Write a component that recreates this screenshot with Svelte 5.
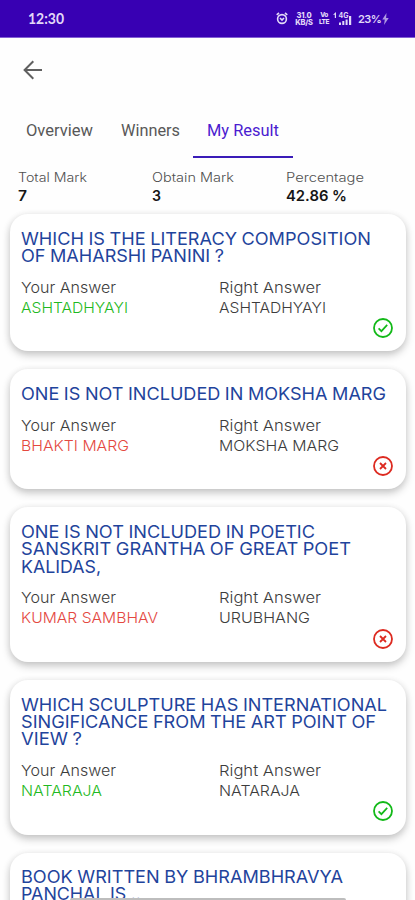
<script>
  // w = drawn width of each line of text, in px
  const TABS = [
    { label: 'Overview', w: 67 },
    { label: 'Winners', w: 59 },
    { label: 'My Result', w: 72, active: true },
  ]

  const STATS = [
    { label: 'Total Mark', w: 69, value: '7', vw: 9 },
    { label: 'Obtain Mark', w: 82, value: '3', vw: 9 },
    { label: 'Percentage', w: 78, value: '42.86 %', vw: 61 },
  ]

  const RESULTS = [
    {
      question: [['WHICH IS THE LITERACY COMPOSITION', 350], ['OF MAHARSHI PANINI ?', 203]],
      yours: ['ASHTADHYAYI', 107],
      right: ['ASHTADHYAYI', 107],
      correct: true,
    },
    {
      question: [['ONE IS NOT INCLUDED IN MOKSHA MARG', 365]],
      yours: ['BHAKTI MARG', 108],
      right: ['MOKSHA MARG', 120],
      correct: false,
    },
    {
      question: [['ONE IS NOT INCLUDED IN POETIC', 294], ['SANSKRIT GRANTHA OF GREAT POET', 330], ['KALIDAS,', 80]],
      yours: ['KUMAR SAMBHAV', 137],
      right: ['URUBHANG', 91],
      correct: false,
    },
    {
      question: [['WHICH SCULPTURE HAS INTERNATIONAL', 366], ['SINGIFICANCE FROM THE ART POINT OF', 355], ['VIEW ?', 61]],
      yours: ['NATARAJA', 81],
      right: ['NATARAJA', 81],
      correct: true,
    },
    {
      question: [['BOOK WRITTEN BY BHRAMBHRAVYA', 322], ['PANCHAL IS ..', 120]],
    },
  ]

  // Stretches a line of text to the given width
  function fit(node, width) {
    const natural = node.getBoundingClientRect().width
    node.style.transform = `scaleX(${width / natural})`
  }
</script>

<div class="screen">
  <header class="status">
    <span class="clock"><span class="line" use:fit={36}>12:30</span></span>
    <div class="indicators">
      <svg class="alarm" width="12" height="13" viewBox="0 0 12 13" fill="none" stroke="currentColor" stroke-width="1.6">
        <circle cx="6" cy="7" r="4.4" />
        <path d="M0.7 2.8 3 1M11.3 2.8 9 1M4 6l2 2 2-2" />
      </svg>
      <div class="tiny speed">
        <span>31.0</span>
        <span>KB/S</span>
      </div>
      <div class="tiny volte">
        <span>Vo</span>
        <span>LTE</span>
      </div>
      <div class="signal">
        <svg width="5" height="6" viewBox="0 0 5 6" fill="currentColor">
          <path d="M3 0v6H1.8V2.8H0z" />
        </svg>
        <div class="bars">
          <span class="net">4G</span>
          <svg width="10" height="6" viewBox="0 0 10 6" fill="currentColor">
            <path d="M0 3.5h2V6H0zM3.3 2h2v4h-2zM6.6 .5h2V6h-2z" />
          </svg>
        </div>
        <svg width="3" height="9" viewBox="0 0 3 9" fill="currentColor">
          <path d="M0 0h2.2v9H0z" />
        </svg>
      </div>
      <span class="battery"><span class="line">23%</span></span>
      <svg class="bolt" width="7" height="12" viewBox="0 0 7 12" fill="currentColor">
        <path d="M4.5 0 .3 6.5h2.5L2 12l4.7-7H4.1z" />
      </svg>
    </div>
  </header>

  <nav class="topbar">
    <button class="back" aria-label="Back">
      <svg width="20" height="20" viewBox="0 0 20 20" fill="none" stroke="#606060" stroke-width="2">
        <path d="M19 10H2M10.3 1.3 1.6 10l8.7 8.7" />
      </svg>
    </button>
  </nav>

  <div class="tabs">
    {#each TABS as tab}
      <button class="tab" class:active={tab.active} style="width: {tab.w + 27.5}px">
        <span class="line" use:fit={tab.w}>{tab.label}</span>
      </button>
    {/each}
  </div>

  <section class="stats">
    {#each STATS as stat}
      <div class="stat">
        <div class="stat-label"><span class="line" use:fit={stat.w}>{stat.label}</span></div>
        <div class="stat-value"><span class="line" use:fit={stat.vw}>{stat.value}</span></div>
      </div>
    {/each}
  </section>

  <main class="results">
    {#each RESULTS as result}
      <article class="card">
        <h2 class="question">
          {#each result.question as [text, w]}
            <div><span class="line" use:fit={w}>{text}</span></div>
          {/each}
        </h2>
        {#if result.yours}
          <div class="answers">
            <div>
              <div><span class="line" use:fit={95}>Your Answer</span></div>
              <div class={result.correct ? 'good' : 'bad'}>
                <span class="line" use:fit={result.yours[1]}>{result.yours[0]}</span>
              </div>
            </div>
            <div>
              <div><span class="line" use:fit={102}>Right Answer</span></div>
              <div><span class="line" use:fit={result.right[1]}>{result.right[0]}</span></div>
            </div>
          </div>
          <svg class="mark {result.correct ? 'good' : 'bad'}" width="20" height="20" viewBox="0 0 20 20" fill="none" stroke="currentColor">
            <circle cx="10" cy="10" r="9" stroke-width="1.8" />
            {#if result.correct}
              <path d="M5.6 10.4 8.4 13.2 14.2 6.9" stroke-width="1.7" />
            {:else}
              <path d="M7 7l6 6M13 7l-6 6" stroke-width="1.8" />
            {/if}
          </svg>
        {/if}
      </article>
    {/each}
  </main>

  <div class="home-bar"></div>
</div>

<style>
  :global(body) {
    margin: 0;
    background: #fefefe;
  }

  .screen {
    position: relative;
    width: 415px;
    height: 900px;
    overflow: hidden;
    display: flex;
    flex-direction: column;
    background: #fefefe;
    font-family: Inter, 'Liberation Sans', sans-serif;
    color: #3c3c3c;
  }

  button {
    border: 0;
    padding: 0;
    background: none;
    font: inherit;
  }

  .line {
    display: inline-block;
    white-space: pre;
    transform-origin: 0 50%;
    vertical-align: top;
  }

  /* Status bar */
  .status {
    flex: none;
    box-sizing: border-box;
    height: 38px;
    padding: 0 26px 0 28px;
    display: flex;
    align-items: center;
    justify-content: space-between;
    background: #3800b3;
    border-bottom: 1px solid #8360d4;
    color: #e2d9f8;
  }

  .clock {
    font-family: Lato, sans-serif;
    font-size: 14.5px;
    font-weight: 700;
  }

  .indicators {
    display: flex;
    align-items: center;
  }

  .tiny {
    display: flex;
    flex-direction: column;
    align-items: center;
    font-size: 7.5px;
    line-height: 7px;
    font-weight: 800;
  }

  .speed { width: 18px; margin-left: 7px; letter-spacing: -0.2px; }
  .volte { width: 10px; margin-left: 6px; font-size: 6.5px; letter-spacing: -0.5px; }

  .signal {
    display: flex;
    height: 13px;
    margin-left: 4px;
  }

  .signal > svg:last-child { align-self: flex-end; }

  .bars {
    display: flex;
    flex-direction: column;
    align-items: center;
    width: 11px;
  }

  .net {
    font-size: 7px;
    line-height: 7px;
    font-weight: 700;
  }

  .battery {
    width: 22px;
    margin-left: 6px;
    font-size: 11px;
    font-weight: 600;
    letter-spacing: -0.5px;
  }

  .bolt { margin-left: 2px; opacity: 0.7; }

  /* Toolbar and tabs */
  .topbar {
    flex: none;
    height: 66px;
    box-sizing: border-box;
    padding: 22px 0 0 23px;
  }

  .back { display: block; width: 20px; height: 20px; }
  .back svg { display: block; }

  .tabs {
    flex: none;
    height: 54px;
    display: flex;
    padding-left: 12px;
    font-family: Roboto, sans-serif;
    font-size: 16px;
    font-weight: 450;
  }

  .tab {
    flex: none;
    box-sizing: border-box;
    height: 53.5px;
    padding: 1px 0 0 14px;
    border-bottom: 2px solid transparent;
    color: #585858;
    text-align: left;
  }

  .tab.active {
    border-bottom-color: #3a1cb8;
    color: #4b1cd0;
  }

  /* Totals */
  .stats {
    flex: none;
    display: grid;
    grid-template-columns: 134px 134px 1fr;
    padding: 10px 0 0 18px;
    height: 56.2px;
    box-sizing: border-box;
  }

  .stat-label {
    font-size: 12.5px;
    line-height: 19px;
    font-weight: 300;
    color: #505050;
  }

  .stat-value {
    font-size: 14.5px;
    line-height: 18px;
    font-weight: 600;
    color: #151515;
  }

  /* Answer cards */
  .results {
    display: flex;
    flex-direction: column;
    gap: 18px;
    padding: 0 9px 0 10px;
  }

  .card {
    flex: none;
    display: flex;
    flex-direction: column;
    box-sizing: border-box;
    padding: 15.6px 13px 13.1px 11px;
    border-radius: 18px;
    background: #fff;
    box-shadow: 0 4px 8px rgba(0, 0, 0, 0.2), 0 1px 7px rgba(0, 0, 0, 0.08);
  }

  .question {
    margin: 0 0 13.4px;
    font-size: 17.4px;
    line-height: 17.3px;
    font-weight: 400;
    word-spacing: -0.5px;
    color: #1f449c;
  }

  .question div { height: 17.3px; }

  .answers {
    display: grid;
    grid-template-columns: 198px 1fr;
    font-size: 15px;
    line-height: 20px;
    font-weight: 300;
  }

  .good { color: #1fb922; }
  .bad { color: #e4483f; }

  .mark {
    display: block;
    align-self: flex-end;
    margin-top: 0.6px;
  }

  svg.good { color: #12b918; }
  svg.bad { color: #dd2a20; }

  /* Gesture handle over the last card */
  .home-bar {
    position: absolute;
    left: 70px;
    bottom: 0;
    width: 276px;
    height: 2.5px;
    border-radius: 2px 2px 0 0;
    background: #bdbdbd;
  }
</style>
